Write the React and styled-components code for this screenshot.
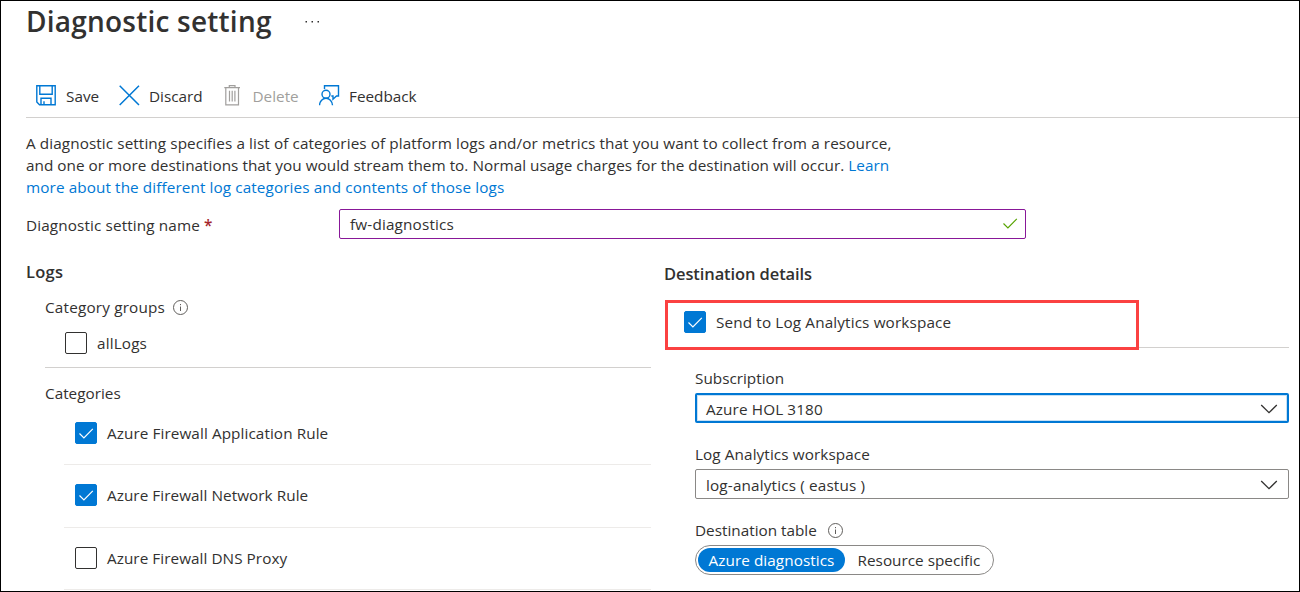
import React from "react";
import styled, { createGlobalStyle, css } from "styled-components";

const GlobalStyle = createGlobalStyle`
  *, *::before, *::after { box-sizing: border-box; }
  body { margin: 0; background: #fff; }
`;

const Page = styled.div`
  width: 1300px;
  height: 592px;
  border: 1px solid #000;
  padding-left: 25px;
  overflow: hidden;
  background: #fff;
  color: #323130;
  font-family: "Open Sans", "Noto Sans", sans-serif;
  font-size: 15.3px;
  line-height: 22px;
  white-space: nowrap;
`;

const Header = styled.header`
  display: flex;
  align-items: center;
  height: 40px;
`;

const Title = styled.h1`
  margin: 0;
  width: 279px;
  font-size: 28px;
  font-weight: 600;
  line-height: 40px;
  letter-spacing: 0.22px;
`;

const Toolbar = styled.div`
  display: flex;
  align-items: center;
  margin-top: 36px;
  height: 41px;
  padding-bottom: 3px;
  border-bottom: 1px solid #d2d0ce;
`;

const Command = styled.button`
  display: flex;
  align-items: center;
  gap: ${(p) => p.$gap || 9}px;
  width: ${(p) => p.$width}px;
  padding: 0 0 0 9px;
  border: 0;
  background: none;
  font: inherit;
  color: ${(p) => (p.$disabled ? "#a19f9d" : "#323130")};
  svg { flex: none; }
`;

const Text = styled.span`
  letter-spacing: ${(p) => p.$ls || 0}px;
`;

const Description = styled.p`
  margin: 14px 0 0;
`;

const Line = styled.span`
  display: block;
  letter-spacing: ${(p) => p.$ls || 0}px;
`;

const Link = styled.a`
  color: #0078d4;
`;

const NameRow = styled.div`
  display: flex;
  align-items: center;
  margin-top: 11px;
`;

const NameLabel = styled.label`
  width: 313px;
  padding-top: 2px;
`;

const Required = styled.span`
  color: #a4262c;
  font-weight: 600;
`;

const Field = styled.div`
  display: flex;
  align-items: center;
  justify-content: space-between;
  width: ${(p) => p.$width}px;
  height: 30px;
  padding: 1px 10px 0 10px;
  border: 1px solid #8a8886;
  border-radius: 2px;
  ${(p) =>
    p.$edited &&
    css`
      border-color: #881798;
      padding: 0 7px 1px 10px;
    `}
  ${(p) =>
    p.$focused &&
    css`
      border: 2px solid #0078d4;
      padding: 1px 9px 0 9px;
      box-shadow: inset 0 0 0 1px #c7e0f4;
    `}
`;

const Columns = styled.div`
  display: flex;
`;

const LogsColumn = styled.section`
  width: 625px;
  padding-top: 22px;
`;

const DestinationColumn = styled.section`
  margin-left: 13px;
  width: 625px;
  padding-top: 24px;
`;

const Heading = styled.h2`
  margin: 0;
  font-size: 16.5px;
  font-weight: 600;
  line-height: 22px;
  letter-spacing: ${(p) => p.$ls || 0}px;
`;

const Groups = styled.div`
  margin: 13px 0 0 19px;
  padding-bottom: 13px;
  border-bottom: 1px solid #d2d0ce;
`;

const LabelRow = styled.div`
  display: flex;
  align-items: center;
  gap: ${(p) => p.$gap || 8}px;
`;

const CheckRow = styled.label`
  display: flex;
  align-items: center;
  gap: 10px;
  padding-left: ${(p) => p.$indent || 0}px;
`;

const Box = styled.span`
  display: flex;
  align-items: center;
  justify-content: center;
  width: 22px;
  height: 22px;
  border: 1px solid ${(p) => (p.$checked ? "#0078d4" : "#323130")};
  border-radius: 2px;
  background: ${(p) => (p.$checked ? "#0078d4" : "#fff")};
`;

const GroupOption = styled.div`
  margin-top: 14px;
`;

const Categories = styled.div`
  margin: 14px 0 0 19px;
`;

const CategoryList = styled.div`
  margin: 18px 0 0 19px;
`;

const Category = styled.div`
  height: ${(p) => p.$height}px;
  margin-bottom: ${(p) => p.$gap}px;
  border-bottom: 1px solid #edebe9;
`;

const Highlight = styled.div`
  width: 474px;
  height: 50px;
  margin: 15px 0 0 1px;
  padding: 8px 0 0 16px;
  border: 3px solid #fb4141;
`;

const SendRow = styled.div`
  display: flex;
  align-items: flex-end;
`;

const Rule = styled.div`
  flex: 1;
  height: 1px;
  margin-bottom: 2px;
  background: #d2d0ce;
`;

const Settings = styled.div`
  padding: 17px 0 0 31px;
`;

const Group = styled.div`
  margin-bottom: 20px;
`;

const FieldSlot = styled.div`
  margin-top: 4px;
`;

const Toggle = styled.div`
  display: inline-flex;
  width: 299px;
  height: 30px;
  margin-top: 4px;
  padding: 2px;
  border: 1px solid #8a8886;
  border-radius: 15px;
`;

const ToggleOption = styled.button`
  display: flex;
  flex: none;
  align-items: center;
  justify-content: center;
  width: ${(p) => p.$width}px;
  height: 24px;
  padding: 0;
  border: 0;
  border-radius: 12px;
  font: inherit;
  letter-spacing: ${(p) => p.$ls || 0}px;
  background: ${(p) => (p.$active ? "#0078d4" : "transparent")};
  color: ${(p) => (p.$active ? "#fff" : "#323130")};
`;

const SaveIcon = () => (
  <svg width="22" height="21" viewBox="-1 0 22 21" fill="none" stroke="#0078d4" strokeWidth="1.4">
    <path d="M.8 .8H19.200V19.700H3.500L.8 17Z" />
    <path d="M3.800 1V9.300H16.200V1M5 19.500V13.300H15V19.500M8 19.500V16.300" />
  </svg>
);
const DiscardIcon = () => (
  <svg width="21" height="21" viewBox="0 0 21 21" fill="none" stroke="#0078d4" strokeWidth="1.5">
    <path d="M.7 .7L20 20M20 .7L.7 20" />
  </svg>
);
const DeleteIcon = () => (
  <svg width="18" height="21" viewBox="-1 0 18 21" fill="none" stroke="#a19f9d" strokeWidth="1.2">
    <path d="M.3 2.700H16M5.300 2.700V.7H11V2.700M1.800 2.700V19.800H14.500V2.700M5.500 5.800V16.500M8.200 5.800V16.500M10.900 5.800V16.500" />
  </svg>
);
const FeedbackIcon = () => (
  <svg width="21" height="21" viewBox="0 0 21 21" fill="none" stroke="#0078d4" strokeWidth="1.4">
    <path d="M5.500 4V.8H19.500V11H17.500L14 14.200V11H12.300" />
    <circle cx="7" cy="9.300" r="4" />
    <path d="M.5 20.300C.7 16 3.700 13.300 7 13.300S13.300 16 13.500 20.300" />
  </svg>
);
const Check = ({ color = "#fff" }) => (
  <svg width="15" height="11" viewBox="0 0 15 11" fill="none" stroke={color} strokeWidth="1.2">
    <path d="M.5 5.500L4.900 9.900L13.800 .9" />
  </svg>
);
const Chevron = () => (
  <svg width="18" height="10" viewBox="0 0 18 10" fill="none" stroke="#323130" strokeWidth="1.3">
    <path d="M1.200 1L9 8.700L16.800 1" />
  </svg>
);
const InfoIcon = () => (
  <svg width="15" height="15" viewBox="0 0 15 15" fill="none" stroke="#605e5c">
    <circle cx="7.500" cy="7.500" r="7" />
    <path d="M7.500 6.500V11M7.500 4V5.200" />
  </svg>
);
const MoreIcon = () => (
  <svg width="16" height="4" viewBox="0 0 16 4" fill="#323130">
    <path d="M.5 2h1.500v1.500h-1.500zM6.500 2h1.500v1.500h-1.500zM12.500 2h1.500v1.500h-1.500z" />
  </svg>
);

const Checkbox = ({ checked, label, indent, ls }) => (
  <CheckRow $indent={indent}>
    <Box $checked={checked}>{checked && <Check />}</Box>
    <Text $ls={ls}>{label}</Text>
  </CheckRow>
);

export default function App() {
  return (
    <Page>
      <GlobalStyle />
      <Header>
        <Title>Diagnostic setting</Title>
        <MoreIcon />
      </Header>
      <Toolbar>
        <Command $width={84}><SaveIcon />Save</Command>
        <Command $width={104}><DiscardIcon />Discard</Command>
        <Command $width={96} $gap={11.5} $disabled><DeleteIcon />Delete</Command>
        <Command $width={120}><FeedbackIcon />Feedback</Command>
      </Toolbar>
      <Description>
        <Line $ls={0.085}>A diagnostic setting specifies a list of categories of platform logs and/or metrics that you want to collect from a resource,</Line>
        <Line $ls={0.03}>and one or more destinations that you would stream them to. Normal usage charges for the destination will occur. <Link>Learn</Link></Line>
        <Line $ls={0.095}><Link>more about the different log categories and contents of those logs</Link></Line>
      </Description>
      <NameRow>
        <NameLabel><Text $ls={0.12}>Diagnostic setting name</Text> <Required>*</Required></NameLabel>
        <Field $width={687} $edited><Text $ls={0.16}>fw-diagnostics</Text><Check color="#57a300" /></Field>
      </NameRow>
      <Columns>
        <LogsColumn>
          <Heading $ls={0.25}>Logs</Heading>
          <Groups>
            <LabelRow><Text $ls={0.18}>Category groups</Text><InfoIcon /></LabelRow>
            <GroupOption><Checkbox indent={20} ls={0.15} label="allLogs" /></GroupOption>
          </Groups>
          <Categories>
            <Text>Categories</Text>
            <CategoryList>
              <Category $height={43} $gap={19}><Checkbox checked indent={11} ls={0.08} label="Azure Firewall Application Rule" /></Category>
              <Category $height={44} $gap={19}><Checkbox checked indent={11} ls={0.05} label="Azure Firewall Network Rule" /></Category>
              <Category $height={43} $gap={20}><Checkbox indent={11} ls={0.05} label="Azure Firewall DNS Proxy" /></Category>
            </CategoryList>
          </Categories>
        </LogsColumn>
        <DestinationColumn>
          <Heading $ls={-0.1}>Destination details</Heading>
          <SendRow>
            <Highlight><Checkbox checked ls={0.13} label="Send to Log Analytics workspace" /></Highlight>
            <Rule />
          </SendRow>
          <Settings>
            <Group>
              <Text>Subscription</Text>
              <FieldSlot><Field $width={594} $focused><Text $ls={0.12}>Azure HOL 3180</Text><Chevron /></Field></FieldSlot>
            </Group>
            <Group>
              <Text $ls={0.09}>Log Analytics workspace</Text>
              <FieldSlot><Field $width={594}><Text $ls={0.15}>log-analytics ( eastus )</Text><Chevron /></Field></FieldSlot>
            </Group>
            <LabelRow $gap={11}><Text>Destination table</Text><InfoIcon /></LabelRow>
            <Toggle>
              <ToggleOption $width={147} $ls={0.06} $active>Azure diagnostics</ToggleOption>
              <ToggleOption $width={148}>Resource specific</ToggleOption>
            </Toggle>
          </Settings>
        </DestinationColumn>
      </Columns>
    </Page>
  );
}
